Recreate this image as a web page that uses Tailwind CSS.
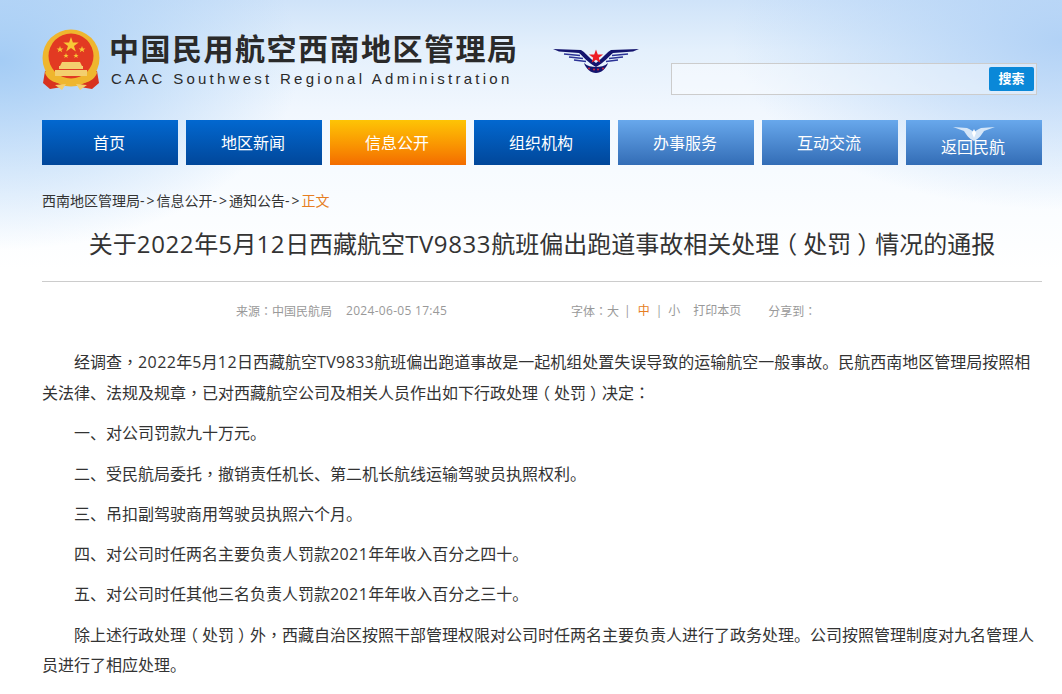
<!DOCTYPE html>
<html lang="zh-CN">
<head>
  <meta charset="UTF-8">
  <title>关于2022年5月12日西藏航空TV9833航班偏出跑道事故相关处理（处罚）情况的通报</title>
  <script src="https://cdn.jsdelivr.net/npm/@tailwindcss/browser@4"></script>
</head>
<body class="bg-white font-['Open_Sans','Noto_Sans_CJK_SC',sans-serif] text-[#333]">
  <!-- sky background sits behind header, nav and breadcrumb -->
  <div class="h-[694px] overflow-hidden bg-[radial-gradient(ellipse_300px_190px_at_0px_60px,#a4ccf5_0%,#a4ccf500_100%),radial-gradient(ellipse_330px_170px_at_1062px_40px,#b2d2f6_0%,#b2d2f600_100%),linear-gradient(180deg,#cfe3f9_0px,#e4f0fc_50px,#f1f7fe_110px,#f7fbff_170px,#ffffff_270px)] bg-no-repeat">
    <header class="w-[1000px] ml-[42px] h-[120px] flex items-start">
      <svg class="mt-[29px] w-[58px] h-[62px] shrink-0" viewBox="0 0 58 62">
        <path d="M3 42 L1 54 L8 60 L20 58 L29 52 L38 58 L50 60 L57 54 L55 42 Z" fill="#d8321f"/>
        <circle cx="29" cy="29" r="28.5" fill="#efb62e"/>
        <circle cx="29" cy="27" r="22.5" fill="#e23a22"/>
        <path d="M29 8 l1.9 5.5 5.8 0 -4.7 3.4 1.8 5.6 -4.8 -3.4 -4.8 3.4 1.8 -5.6 -4.7 -3.4 5.8 0z" fill="#f8c836"/>
        <path d="M18 17l.9 2.4 2.5 0 -2 1.5 .8 2.4 -2.2 -1.5 -2.2 1.5 .8 -2.4 -2 -1.5 2.5 0z M40 17l.9 2.4 2.5 0 -2 1.5 .8 2.4 -2.2 -1.5 -2.2 1.5 .8 -2.4 -2 -1.5 2.5 0z M24 24l.7 1.9 2 0 -1.6 1.2 .6 1.9 -1.7 -1.2 -1.7 1.2 .6 -1.9 -1.6 -1.2 2 0z M34 24l.7 1.9 2 0 -1.6 1.2 .6 1.9 -1.7 -1.2 -1.7 1.2 .6 -1.9 -1.6 -1.2 2 0z" fill="#f8c836"/>
        <path d="M20 33h18l2 4h-22z M17 37h24v3h-24z M13 41h32v6h-32z" fill="#f4cf6e"/>
        <path d="M5 38 C8 48 16 52 29 51 C42 52 50 48 53 38 L55 44 C52 52 42 56 36 53 C33 51 31 52 29 54 C27 52 25 51 22 53 C16 56 6 52 3 44 Z" fill="#efb62e"/>
        <path d="M13 56 L24 55 L20 61 Z M45 56 L34 55 L38 61 Z" fill="#f4cf6e"/>
      </svg>
      <div class="ml-[9px] mt-[30px] w-[430px] shrink-0 font-['Liberation_Sans','Noto_Sans_CJK_SC',sans-serif] text-[#2a2a2a]">
        <div class="text-[30px] leading-[40px] font-bold tracking-[1.5px] whitespace-nowrap">中国民用航空西南地区管理局</div>
        <div class="text-[15px] leading-[20px] tracking-[3.26px] whitespace-nowrap pl-[2px] mt-[-1px]">CAAC Southwest Regional Administration</div>
      </div>
      <svg class="mt-[48px] ml-[14px] w-[86px] h-[25px] shrink-0" viewBox="0 0 86 25">
        <g id="wing">
          <path d="M0 1 L28 2 C32 4 35 9 43 15 L43 19 C35 15 30 8 26 5 L6 3.5 Z" fill="#14146e"/>
          <path d="M11 6 L27 7.5 M16 9 L30 10.5 M21 12 L33 13.5" stroke="#2a3296" stroke-width="1.5" fill="none"/>
        </g>
        <g transform="matrix(-1 0 0 1 86 0)">
          <path d="M0 1 L28 2 C32 4 35 9 43 15 L43 19 C35 15 30 8 26 5 L6 3.5 Z" fill="#14146e"/>
          <path d="M11 6 L27 7.5 M16 9 L30 10.5 M21 12 L33 13.5" stroke="#2a3296" stroke-width="1.5" fill="none"/>
        </g>
        <path d="M31 15 C33 21 38 25 43 25 C48 25 53 21 55 15 C52 18 47 19 43 19 C39 19 34 18 31 15 Z" fill="#14146e"/>
        <path d="M42 1.5 l1.8 5 5.3 0 -4.3 3.2 1.6 5.1 -4.4 -3.1 -4.4 3.1 1.6 -5.1 -4.3 -3.2 5.3 0z" transform="translate(1 0)" fill="#ee1c25"/>
        <circle cx="36" cy="20.5" r="1" fill="#d3233a"/>
        <circle cx="41" cy="21.5" r="1" fill="#d3233a"/>
        <circle cx="45" cy="21.5" r="1" fill="#d3233a"/>
        <circle cx="50" cy="20.5" r="1" fill="#d3233a"/>
      </svg>
      <div class="mt-[63px] ml-[32px] w-[366px] h-[32px] shrink-0 border border-[#ccc] flex items-center justify-end pr-[2px] bg-white/40">
        <button class="w-[45px] h-[24px] bg-[#0a88d8] rounded-[2px] text-white text-[13px] font-bold font-['Liberation_Sans','Noto_Sans_CJK_SC',sans-serif]">搜索</button>
      </div>
    </header>

    <nav class="w-[1000px] ml-[42px] grid grid-cols-7 gap-[8px] text-white text-[16px]">
      <a class="h-[45px] flex items-center justify-center pr-[2px] bg-gradient-to-b from-[#0268d0] to-[#01479a]">首页</a>
      <a class="h-[45px] flex items-center justify-center pr-[2px] bg-gradient-to-b from-[#0268d0] to-[#01479a]">地区新闻</a>
      <a class="h-[45px] flex items-center justify-center pr-[2px] bg-gradient-to-b from-[#fdc405] to-[#f36c00]">信息公开</a>
      <a class="h-[45px] flex items-center justify-center pr-[2px] bg-gradient-to-b from-[#0268d0] to-[#01479a]">组织机构</a>
      <a class="h-[45px] flex items-center justify-center pr-[2px] bg-gradient-to-b from-[#68a8ec] to-[#336db6]">办事服务</a>
      <a class="h-[45px] flex items-center justify-center pr-[2px] bg-gradient-to-b from-[#68a8ec] to-[#336db6]">互动交流</a>
      <a class="relative h-[45px] flex items-center justify-center pt-[9px] pr-[2px] bg-gradient-to-b from-[#68a8ec] to-[#336db6]">
        <svg class="absolute left-[47px] top-[6px] w-[42px] h-[16px]" viewBox="0 0 42 16">
          <path d="M0 1 L14 2 C17 3 19 5 21 6 C23 5 25 3 28 2 L42 1 L31 5 C29 8 26 13 21 15 C16 13 13 8 11 5 Z" fill="#d5e6f8"/>
          <path d="M21 3 L23 7 L21 12 L19 7 Z" fill="#ffffff"/>
        </svg>
        返回民航
      </a>
    </nav>

    <div class="w-[1000px] ml-[42px] mt-[26px] text-[14px] leading-[20px] text-[#333]">西南地区管理局<span class="tracking-[2px]">-&gt;</span>信息公开<span class="tracking-[2px]">-&gt;</span>通知公告<span class="tracking-[2px]">-&gt;</span><span class="text-[#e67e22]">正文</span></div>

    <main class="w-[1000px] ml-[42px]">
      <h1 class="mt-[16px] h-[55px] leading-[34px] text-center text-[24px] text-[#333] border-b border-[#ccc] whitespace-nowrap">关于<span class="tracking-[.025em]">2022</span>年<span class="tracking-[.025em]">5</span>月<span class="tracking-[.025em]">12</span>日西藏航空<span class="tracking-[.025em]">TV9833</span>航班偏出跑道事故相关处理<span class="relative left-[-0.25em]">（</span>处罚<span class="relative left-[0.25em]">）</span>情况的通报</h1>
      <div class="flex mt-[19px] h-[20px] text-[12px] leading-[20px] text-[#999] whitespace-nowrap">
        <span class="ml-[194px] w-[110px]">来源<span lang="zh-TW" class="font-['Noto_Sans_CJK_TC']">：</span>中国民航局</span>
        <span class="w-[225px] tracking-[.3px]">2024-06-05 17:45</span>
        <span>字体<span lang="zh-TW" class="font-['Noto_Sans_CJK_TC']">：</span>大</span>
        <span class="ml-[5px] mr-[7px]">|</span>
        <span class="text-[#e67e22]">中</span>
        <span class="ml-[6px] mr-[6px]">|</span>
        <span class="w-[25px]">小</span>
        <span class="w-[75px]">打印本页</span>
        <span>分享到<span lang="zh-TW" class="font-['Noto_Sans_CJK_TC']">：</span></span>
      </div>
      <article class="mt-[25px] text-[16px] leading-[30px] text-[#333]">
        <p class="indent-[32px] mb-[10px]">经调查<span lang="zh-TW" class="font-['Noto_Sans_CJK_TC']">，</span><span class="tracking-[.025em]">2022</span>年<span class="tracking-[.025em]">5</span>月<span class="tracking-[.025em]">12</span>日西藏航空<span class="tracking-[.025em]">TV9833</span>航班偏出跑道事故是一起机组处置失误导致的运输航空一般事故。民航西南地区管理局按照相关法律、法规及规章<span lang="zh-TW" class="font-['Noto_Sans_CJK_TC']">，</span>已对西藏航空公司及相关人员作出如下行政处理<span class="relative left-[-0.25em]">（</span>处罚<span class="relative left-[0.25em]">）</span>决定<span lang="zh-TW" class="font-['Noto_Sans_CJK_TC']">：</span></p>
        <p class="indent-[32px] mb-[10px]">一、对公司罚款九十万元。</p>
        <p class="indent-[32px] mb-[10px]">二、受民航局委托<span lang="zh-TW" class="font-['Noto_Sans_CJK_TC']">，</span>撤销责任机长、第二机长航线运输驾驶员执照权利。</p>
        <p class="indent-[32px] mb-[10px]">三、吊扣副驾驶商用驾驶员执照六个月。</p>
        <p class="indent-[32px] mb-[10px]">四、对公司时任两名主要负责人罚款<span class="tracking-[.025em]">2021</span>年年收入百分之四十。</p>
        <p class="indent-[32px] mb-[10px]">五、对公司时任其他三名负责人罚款<span class="tracking-[.025em]">2021</span>年年收入百分之三十。</p>
        <p class="indent-[32px] mb-[10px]">除上述行政处理<span class="relative left-[-0.25em]">（</span>处罚<span class="relative left-[0.25em]">）</span>外<span lang="zh-TW" class="font-['Noto_Sans_CJK_TC']">，</span>西藏自治区按照干部管理权限对公司时任两名主要负责人进行了政务处理。公司按照管理制度对九名管理人员进行了相应处理。</p>
      </article>
    </main>
  </div>
</body>
</html>
